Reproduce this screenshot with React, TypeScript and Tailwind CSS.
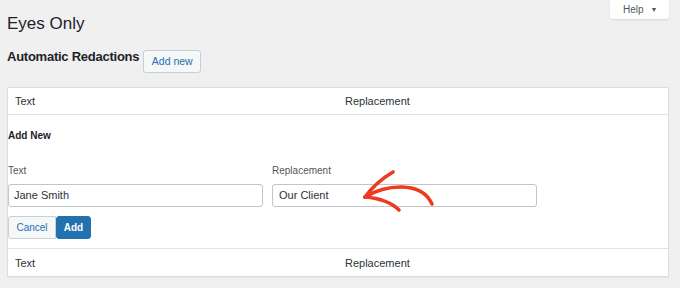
import React from "react";

export default function App() {
  return (
    <div
      className="relative w-[680px] h-[288px] overflow-hidden bg-[#f0f0f1] text-[#1d2327]"
      style={{ fontFamily: '"Liberation Sans", Arial, sans-serif' }}
    >
      <div className="pl-[7px]">
        <div className="float-right mr-[11px] flex h-[19px] w-[59px] items-center rounded-b-[3px] bg-white pl-[13px] text-[10px] text-[#50575e] shadow-[0_1px_2px_rgba(0,0,0,0.1)]">
          <span>Help</span>
          <span className="ml-[7px] text-[7px] leading-none">▼</span>
        </div>
        <h1 className="pt-[12px] text-[17px] leading-[24px] font-normal text-[#1d2327]">Eyes Only</h1>
        <div className="mt-[11px] flex items-start">
          <h2 className="text-[13px] leading-[20px] font-bold tracking-[-0.25px] text-[#1d2327]">Automatic Redactions</h2>
          <button className="ml-[4px] mt-[3px] flex h-[23px] w-[58px] items-center justify-center rounded-[3px] border border-[#c5cfdb] bg-[#f6f7f7] text-[10.5px] text-[#2271b1]">
            Add new
          </button>
        </div>
        <div className="mt-[14px] w-[662px] border border-[#dcdcde] bg-white shadow-[0_1px_1px_rgba(0,0,0,0.04)]">
          <div className="grid h-[27px] grid-cols-2 items-center border-b border-[#e2e2e4] text-[11px] leading-[16px] text-[#2c3338]">
            <div className="pl-[7px]">Text</div>
            <div className="pl-[7px]">Replacement</div>
          </div>
          <div className="pt-[14px] pb-[9px]">
            <div className="text-[10px] leading-[14px] font-bold text-[#1d2327]">Add New</div>
            <div className="mt-[21px] flex gap-[9px]">
              <div className="flex w-[255px] flex-col">
                <label className="text-[10px] leading-[14px] text-[#50575e]">Text</label>
                <div className="mt-[6px] flex h-[23px] items-center rounded-[3px] border border-[#c3c4c7] pl-[5px] text-[11px] text-[#2c3338]">
                  Jane Smith
                </div>
              </div>
              <div className="flex w-[265px] flex-col">
                <label className="text-[10px] leading-[14px] text-[#50575e]">Replacement</label>
                <div className="mt-[6px] flex h-[23px] items-center rounded-[3px] border border-[#c3c4c7] pl-[6px] text-[11px] text-[#2c3338]">
                  Our Client
                </div>
              </div>
            </div>
            <div className="mt-[9px] flex">
              <button className="flex h-[23px] w-[48px] items-center justify-center rounded-l-[3px] border border-[#c8d0da] bg-[#f6f7f7] text-[10px] text-[#2271b1]">
                Cancel
              </button>
              <button className="flex h-[23px] w-[35px] items-center justify-center rounded-[3px] border border-[#2271b1] bg-[#2271b1] text-[10px] font-bold text-white">
                Add
              </button>
            </div>
          </div>
          <div className="grid h-[28px] grid-cols-2 items-center border-t border-[#e2e2e4] text-[11px] leading-[16px] text-[#2c3338]">
            <div className="pl-[7px]">Text</div>
            <div className="pl-[7px]">Replacement</div>
          </div>
        </div>
      </div>
      <svg
        className="pointer-events-none absolute left-0 top-0"
        width="680"
        height="288"
        viewBox="0 0 680 288"
        fill="none"
      >
        <g stroke="#ee3a1e" strokeWidth="3.6" strokeLinecap="round" strokeLinejoin="round">
          <path d="M365 197 C 385 185, 421 180, 432 204" />
          <path d="M393 172 Q 376 182 365 197" />
          <path d="M365 197 Q 388 199 399 210" />
        </g>
      </svg>
    </div>
  );
}
